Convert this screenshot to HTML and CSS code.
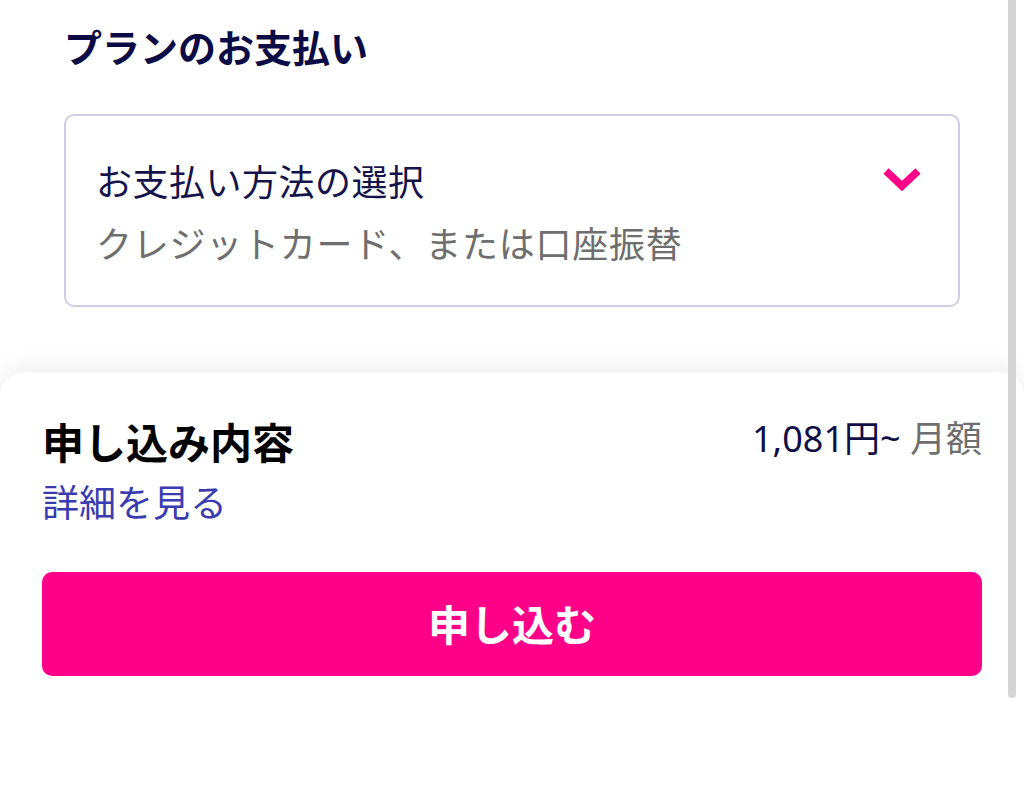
FILE: index.html
```html
<!DOCTYPE html>
<html lang="ja">
<head>
<meta charset="utf-8">
<link rel="stylesheet" href="styles.css">
</head>
<body>
<div class="page">
  <section class="content">
    <h1 class="title">プランのお支払い</h1>
    <div class="select-box">
      <div class="select-row">
        <span class="select-label">お支払い方法の選択</span>
        <svg class="chevron" width="38" height="26" viewBox="0 0 38 26"><path d="M3 4 L19 19 L35 4" fill="none" stroke="#ff0088" stroke-width="7.5" stroke-linejoin="miter"/></svg>
      </div>
      <div class="select-sub">クレジットカード、または口座振替</div>
    </div>
  </section>
  <section class="sheet">
    <div class="sheet-row">
      <span class="sheet-title">申し込み内容</span>
      <span class="price"><span class="price-num">1,081円~</span> <span class="price-unit">月額</span></span>
    </div>
    <a class="detail-link">詳細を見る</a>
    <button class="apply-btn">申し込む</button>
  </section>
  <div class="scrollbar"></div>
</div>
</body>
</html>
```
FILE: styles.css
```css
html, body {
  margin: 0;
  padding: 0;
  background: #ffffff;
}
body {
  font-family: "Noto Sans CJK JP", "Noto Sans", sans-serif;
  width: 1024px;
  height: 802px;
  overflow: hidden;
}
.page {
  position: relative;
  height: 802px;
  display: flex;
  flex-direction: column;
}
.content {
  padding: 20px 64px 0 64px;
}
.title {
  margin: 0;
  font-size: 38px;
  line-height: 52px;
  font-weight: 700;
  color: #0c0b45;
}
.select-box {
  margin-top: 42px;
  border: 2px solid #d0cee4;
  border-radius: 10px;
  padding: 33px 37px 32px 30px;
}
.select-row {
  display: flex;
  justify-content: space-between;
  align-items: center;
}
.select-label {
  font-size: 36px;
  line-height: 62px;
  color: #15144a;
  letter-spacing: 0.5px;
}
.chevron {
  display: block;
}
.select-sub {
  font-size: 36px;
  line-height: 62px;
  color: #6e6e6e;
  letter-spacing: 0.75px;
}
.sheet {
  margin-top: 65px;
  flex: 1;
  border-radius: 24px 24px 0 0;
  box-shadow: 0 -6px 22px rgba(0, 0, 0, 0.07);
  padding: 41px 42px 0 42px;
  display: flex;
  flex-direction: column;
  background: #fff;
}
.sheet-row {
  display: flex;
  justify-content: space-between;
  align-items: center;
}
.sheet-title {
  font-size: 42px;
  line-height: 56px;
  font-weight: 700;
  color: #000;
}
.price {
  font-size: 36px;
  line-height: 56px;
  margin-top: -4px;
  font-family: "Noto Sans", "Noto Sans CJK JP", sans-serif;
}
.price-num {
  color: #0f0e45;
}
.price-unit {
  color: #6e6e6e;
}
.detail-link {
  margin-top: 7px;
  font-size: 37px;
  line-height: 50px;
  color: #3b3bb0;
  align-self: flex-start;
}
.apply-btn {
  margin-top: 46px;
  height: 104px;
  border: none;
  border-radius: 10px;
  background: #ff0088;
  color: #fff;
  font-family: inherit;
  font-size: 42px;
  font-weight: 700;
  padding-bottom: 4px;
}
.scrollbar {
  position: absolute;
  top: 0;
  right: 8px;
  width: 8px;
  height: 698px;
  background: #d4d4d4;
  border-radius: 0 0 4px 4px;
}
```
